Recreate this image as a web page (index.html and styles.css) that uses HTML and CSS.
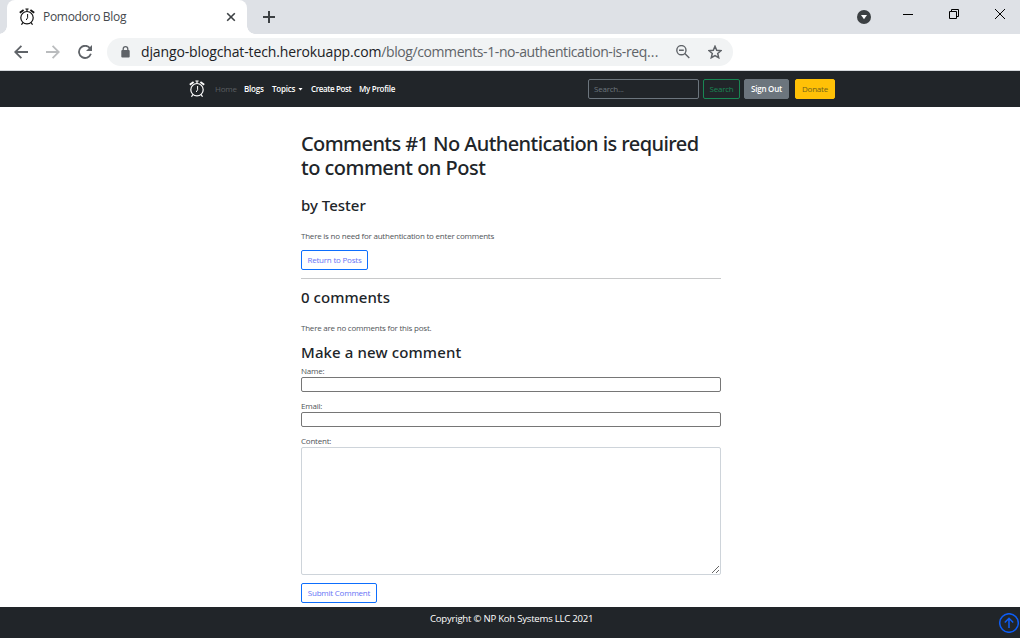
FILE: index.html
```html
<!DOCTYPE html>
<html lang="en">
<head>
<meta charset="utf-8">
<title>Pomodoro Blog</title>
<link rel="stylesheet" href="styles.css">
</head>
<body>
<svg width="0" height="0" class="defs">
  <symbol id="clock" viewBox="0 0 16 18">
    <g fill="none" stroke="currentColor">
      <circle cx="8" cy="9.7" r="6.2" stroke-width="1.2"/>
      <path d="M8.6 6v3.8L7.2 12" stroke-width="1"/>
      <path d="M3.8 14.6 2.5 16.7M12.2 14.6l1.3 2.1" stroke-width="1.2"/>
      <path d="M6.4 1h3.2M8 1v2.2" stroke-width="1.2"/>
      <path d="M.8 4.8 4.6 2.1M15.2 4.8l-3.8-2.7" stroke-width="1.9"/>
    </g>
  </symbol>
</svg>
<header class="tabstrip">
  <div class="tab">
    <svg class="favicon"><use href="#clock"/></svg>
    <span class="tab-title">Pomodoro Blog</span>
    <svg class="tab-close" viewBox="0 0 10 10"><path d="M1.2 1.2l7.6 7.6M8.8 1.2 1.2 8.8"/></svg>
  </div>
  <svg class="new-tab" viewBox="0 0 12 12"><path d="M6 0v12M0 6h12"/></svg>
  <div class="window-controls">
    <svg class="guest" viewBox="0 0 14 14"><circle cx="7" cy="7" r="7" fill="#3c4043"/><path d="M4 5h6L7 9.2z" fill="#fff"/></svg>
    <svg class="minimize" viewBox="0 0 10 10"><path d="M0 4.5h10"/></svg>
    <svg class="restore" viewBox="0 0 10 10"><path d="M.5 2.5h7v7h-7zM2.5 2.5v-2h7v7h-2"/></svg>
    <svg class="close" viewBox="0 0 10 10"><path d="M0 0l10 10M10 0 0 10"/></svg>
  </div>
</header>
<div class="toolbar">
  <svg class="back" viewBox="0 0 14 14"><path d="M14 7H1.5M7.4 .8 1.2 7l6.2 6.2"/></svg>
  <svg class="forward" viewBox="0 0 14 14"><path d="M0 7h12.5M6.6 .8 12.8 7l-6.2 6.2"/></svg>
  <svg class="reload" viewBox="0 0 14 14"><path d="M12 3.2A6.1 6.1 0 1 0 12.9 8.8"/><path d="M14 0v6H8z" class="solid"/></svg>
  <div class="omnibox">
    <svg class="lock" viewBox="0 0 9 12"><rect x=".3" y="4" width="8.4" height="7.6" rx="1"/><path d="M2.2 4.5V3a2.3 2.3 0 0 1 4.6 0v1.5"/></svg>
    <span class="url"><b>django-blogchat-tech.herokuapp.com</b>/blog/comments-1-no-authentication-is-req<i>...</i></span>
    <svg class="zoom-out" viewBox="0 0 14 14"><circle cx="5.4" cy="5.2" r="4.6"/><path d="M8.8 8.6l4.5 4.5M3 5.2h4.8"/></svg>
    <svg class="star" viewBox="0 0 14 14"><path d="M7 1.3l1.7 4 4.3.4-3.3 2.8 1 4.2L7 10.5l-3.7 2.2 1-4.2L1 5.7l4.3-.4z"/></svg>
  </div>
</div>
<nav class="navbar">
  <svg class="brand"><use href="#clock"/></svg>
  <a class="link home">Home</a>
  <a class="link blogs">Blogs</a>
  <a class="link topics">Topics</a><i class="caret"></i>
  <a class="link create">Create Post</a>
  <a class="link profile">My Profile</a>
  <form class="search">
    <div class="search-input"><span>Search...</span></div>
    <span class="btn btn-search"><span>Search</span></span>
    <span class="btn btn-signout"><span>Sign Out</span></span>
    <span class="btn btn-donate"><span>Donate</span></span>
  </form>
</nav>
<main class="content">
  <h1><span class="title-a">Comments #1 No Authentication is required</span> <span class="title-b">to comment on Post</span></h1>
  <h2 class="author">by Tester</h2>
  <p class="body-text">There is no need for authentication to enter comments</p>
  <span class="btn btn-outline return">Return to Posts</span>
  <hr>
  <h2 class="count">0 comments</h2>
  <p class="empty">There are no comments for this post.</p>
  <h2 class="new-comment">Make a new comment</h2>
  <label>Name:</label>
  <input type="text">
  <label>Email:</label>
  <input type="text">
  <label>Content:</label>
  <textarea></textarea>
  <span class="btn btn-outline submit">Submit Comment</span>
</main>
<footer class="footer">
  <span>Copyright © NP Koh Systems LLC 2021</span>
  <svg class="to-top" viewBox="0 0 20 20"><circle cx="10" cy="10" r="9.3"/><path d="M10 15V5.5M5.8 9.5 10 5.3l4.2 4.2"/></svg>
</footer>
</body>
</html>
```

FILE: styles.css
```css
* { box-sizing: border-box; }
body {
  margin: 0;
  width: 1020px;
  height: 638px;
  overflow: hidden;
  display: flex;
  flex-direction: column;
  background: #fff;
  color: #212529;
  font-family: "Open Sans", "Noto Sans", sans-serif;
  font-size: 8px;
  line-height: 12px;
  letter-spacing: -.22px;
}
svg { display: block; flex: none; fill: none; }
.defs { position: absolute; }

.tabstrip { height: 34px; flex: none; display: flex; background: #dee1e6; padding-left: 7px; }
.tab {
  width: 240px; height: 34px; display: flex; align-items: center; position: relative;
  padding-left: 12px; background: #fff; border-radius: 8px 8px 0 0;
}
/* flared feet where the active tab meets the toolbar */
.tab::before, .tab::after { content: ""; position: absolute; bottom: 0; width: 8px; height: 8px; }
.tab::before { left: -8px; background: radial-gradient(circle at 0 0, transparent 7.5px, #fff 8px); }
.tab::after { right: -8px; background: radial-gradient(circle at 100% 0, transparent 7.5px, #fff 8px); }
.favicon { width: 16px; height: 18px; color: #111; }
.tab-title { width: 176px; margin-left: 8px; font-size: 12px; line-height: 16px; letter-spacing: -.3px; color: #45494d; white-space: nowrap; }
.tab-close { width: 10px; height: 10px; margin-left: 7px; stroke: #3c4043; stroke-width: 1.6; }
.new-tab { width: 12px; height: 12px; margin: 11px 0 0 16px; stroke: #3c4043; stroke-width: 2; }
.window-controls { display: flex; margin-left: auto; padding-right: 15px; stroke: #000; stroke-width: 1; }
.guest { width: 14px; height: 14px; margin-top: 10px; stroke: none; }
.minimize { width: 10px; height: 10px; margin: 10px 0 0 32px; }
.restore { width: 10px; height: 10px; margin: 9px 0 0 36px; }
.close { width: 10px; height: 10px; margin: 9px 0 0 36px; }

.toolbar { height: 37px; flex: none; display: flex; align-items: center; padding-left: 14px; border-bottom: 1px solid #d5d8dc; }
.toolbar svg { width: 14px; height: 14px; stroke: #5f6368; stroke-width: 1.8; }
.toolbar .forward { margin-left: 18px; stroke: #babcbe; }
.toolbar .reload { margin-left: 18px; }
.toolbar .solid { fill: #5f6368; stroke: none; }
.omnibox { width: 626px; height: 28px; margin-left: 15px; padding-left: 14px; display: flex; align-items: center; background: #f1f3f4; border-radius: 14px; }
.toolbar .lock { width: 9px; height: 12px; stroke-width: 1.3; }
.lock rect { fill: #5f6368; stroke: none; }
.url { width: 534px; margin-left: 11px; font-size: 14px; line-height: 20px; letter-spacing: -.41px; color: #5f6368; white-space: nowrap; }
.url b { font-weight: 400; color: #202124; letter-spacing: -.13px; }
.url i { font-style: normal; letter-spacing: .3px; }
.toolbar .zoom-out { margin-left: 1px; stroke-width: 1.4; }
.toolbar .star { margin-left: 18px; stroke-width: 1.5; }

.navbar { height: 36px; flex: none; display: flex; align-items: center; padding-left: 189px; background: #212529; color: #fff; }
.brand { width: 16px; height: 18px; color: #fff; margin-right: 10px; }
.link { white-space: nowrap; font-weight: 600; }
.home { width: 29px; color: #5b5f62; font-weight: 400; }
.blogs { width: 28px; }
.topics { width: 26px; }
.caret { width: 5px; height: 3px; background: #fff; clip-path: polygon(0 0, 100% 0, 50% 100%); }
.create { width: 48px; margin-left: 8px; letter-spacing: -.38px; }
.profile { width: 44px; letter-spacing: -.3px; }
.search { display: flex; margin-left: auto; margin-right: 185px; }
.search-input { width: 111px; height: 20px; margin-right: 4px; border: 1px solid #6c757d; border-radius: 2px; padding: 3px 5px; color: #6c757d; }
.btn { height: 20px; display: flex; align-items: center; justify-content: center; white-space: nowrap; border: 1px solid; border-radius: 2px; }
.btn-search { width: 37px; color: #198754; margin-right: 4px; }
.btn-signout { width: 45px; background: #6c757d; border-color: #6c757d; font-weight: 600; margin-right: 6px; }
.btn-donate { width: 40px; background: #ffc107; border-color: #ffc107; color: #73611a; }

.content { width: 420px; height: 500px; margin-left: 301px; padding-top: 25px; display: flex; flex-direction: column; flex: none; }
h1, h2 { margin: 0; font-weight: 500; white-space: nowrap; font-family: "Noto Sans", "Open Sans", sans-serif; letter-spacing: 0; }
h1 { font-size: 20px; line-height: 24px; }
h1 span { display: block; }
.title-a { letter-spacing: -.58px; }
.title-b { letter-spacing: -.52px; }
h2 { font-size: 15px; line-height: 19px; }
p { margin: 0; }
p, label { color: #505458; font-size: 8px; line-height: 12px; white-space: nowrap; }
.author { margin: 16px 0 15px; }
.btn-outline { color: #6673f5; border-color: #0d6efd; margin-top: 8px; }
.return { width: 67px; }
hr { width: 100%; height: 1px; margin: 8px 0 9px; border: 0; background: #c8c9ca; }
.count { margin-bottom: 15px; letter-spacing: .05px; }
.new-comment { margin: 9px 0 3px; letter-spacing: .12px; }
input { width: 420px; height: 15px; margin: 0 0 8px; border: 1px solid #767676; border-radius: 2px; padding: 0; }
textarea { width: 420px; height: 128px; margin: 0; border: 1px solid #ced4da; border-radius: 2px; display: block; resize: both; }
.submit { width: 76px; }

.footer { height: 31px; flex: none; position: relative; background: #212529; color: #fff; padding: 5px 0 0 430px; font-size: 9.6px; line-height: 13px; letter-spacing: -.24px; white-space: nowrap; }
.to-top { position: absolute; right: 1px; top: 6px; width: 20px; height: 20px; stroke: #0d5df5; stroke-width: 1.5; }
```
